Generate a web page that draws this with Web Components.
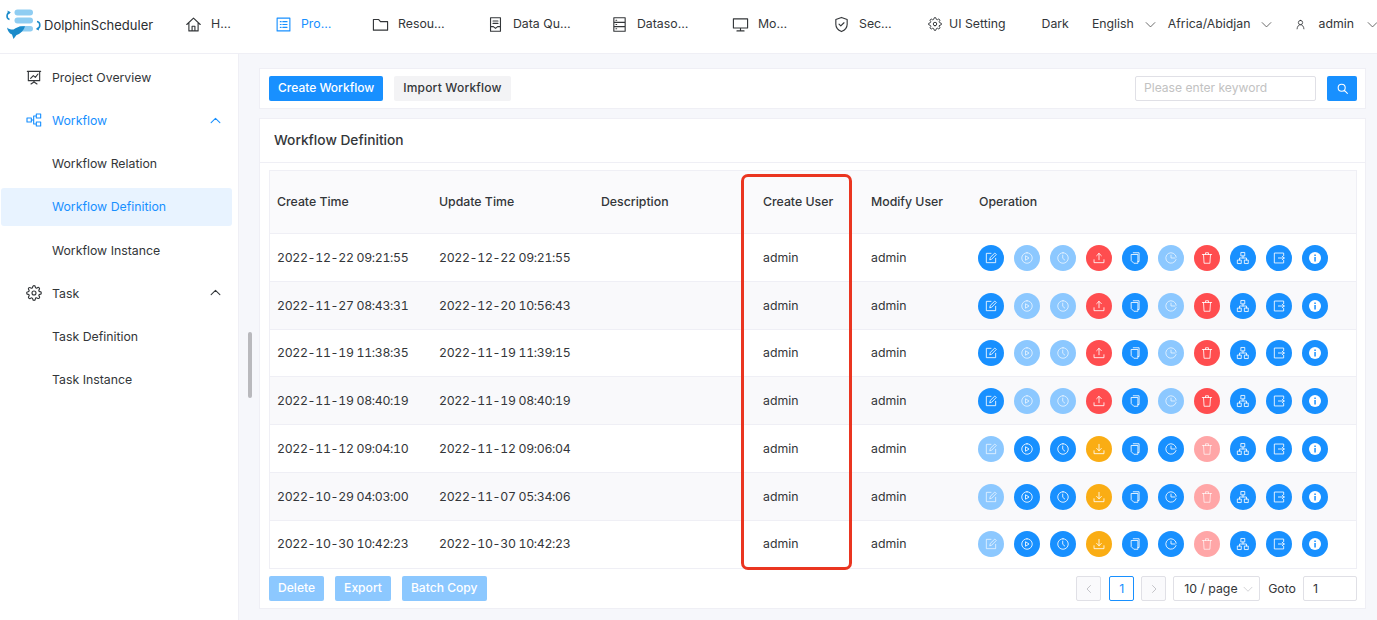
<!DOCTYPE html>
<html lang="en">
<head>
<meta charset="utf-8">
<title>DolphinScheduler</title>
<style>
  html, body { margin: 0; height: 620px; overflow: hidden; background: #f6f7fb; }
  body { font: 12.3px/20px Inter, "Liberation Sans", sans-serif; color: #333639; white-space: nowrap; }
</style>
</head>
<body>
<ds-app></ds-app>

<script>
// stroke paths, all on a 24 box
const ICONS = {
  home: 'M2.5 12 12 3l9.500 9M5.500 10v11h13V10M10 21v-6.500h4V21',
  project: 'M3 3h18v18H3zM7.500 8h1.200M7.500 12h1.200M7.500 16h1.200M11 8h6M11 12h6M11 16h6',
  folder: 'M2 5h7.500l2.500 3h10v12H2z',
  quality: 'M5 2.500h14v19H5zM8.500 7h7M8.500 10.500h7M5 15h4l3 2.500 3-2.500h4',
  source: 'M4 2.500h16v19H4zM4 9h16M4 15h16M7 6h1M7 12h1M7 18h1',
  monitor: 'M2 4h20v13H2zM12 17v4M7 21h10',
  shield: 'M12 2 20 5v6.500c0 5-3.500 8.500-8 10.500-4.500-2-8-5.500-8-10.500V5zM8.500 11.500l2.500 2.500 4.500-4.500',
  gear: 'M12 15a3 3 0 1 0 0-6 3 3 0 0 0 0 6zM19.4 15a1.65 1.65 0 0 0 .33 1.82l.06.06a2 2 0 0 1 0 2.83 2 2 0 0 1-2.83 0l-.06-.06a1.65 1.65 0 0 0-1.82-.33 1.65 1.65 0 0 0-1 1.51V21a2 2 0 0 1-2 2 2 2 0 0 1-2-2v-.09A1.65 1.65 0 0 0 9 19.4a1.65 1.65 0 0 0-1.82.33l-.06.06a2 2 0 0 1-2.83 0 2 2 0 0 1 0-2.83l.06-.06a1.65 1.65 0 0 0 .33-1.82 1.65 1.65 0 0 0-1.51-1H3a2 2 0 0 1-2-2 2 2 0 0 1 2-2h.09A1.65 1.65 0 0 0 4.6 9a1.65 1.65 0 0 0-.33-1.82l-.06-.06a2 2 0 0 1 0-2.83 2 2 0 0 1 2.83 0l.06.06a1.65 1.65 0 0 0 1.82.33H9a1.65 1.65 0 0 0 1-1.51V3a2 2 0 0 1 2-2 2 2 0 0 1 2 2v.09a1.65 1.65 0 0 0 1 1.51 1.65 1.65 0 0 0 1.82-.33l.06-.06a2 2 0 0 1 2.83 0 2 2 0 0 1 0 2.83l-.06.06a1.65 1.65 0 0 0-.33 1.82V9a1.65 1.65 0 0 0 1.51 1H21a2 2 0 0 1 2 2 2 2 0 0 1-2 2h-.09a1.65 1.65 0 0 0-1.51 1z',
  user: 'M12 3a4.700 4.700 0 1 0 0 9.400A4.700 4.700 0 0 0 12 3zM4.500 21.500c.4-5.500 3.500-9 7.500-9s7.100 3.500 7.500 9',
  down: 'M4 8.500l8 8 8-8',
  up: 'M5 15.500l7-7 7 7',
  left: 'M15 5l-7 7 7 7',
  right: 'M9 5l7 7-7 7',
  overview: 'M2 3.500h20M3.500 3.500v14h17v-14M7 14l4-4 3 2.500 4-5M12 17.500v2M7.500 22.500l4.500-3 4.500 3',
  workflow: 'M1.500 9h6.500v6H1.500zM15.500 3H22v6h-6.500zM15.500 15H22v6h-6.500zM8 12h3.500M11.500 6v12M11.500 6h4M11.500 18h4',
  search: 'M10.500 4a6.500 6.500 0 1 0 0 13 6.500 6.500 0 0 0 0-13zM15.500 15.500 21 21',
  edit: 'M20 12.500V20H4V4h8M10 14.500l.8-3.500L18.500 3.500l2.500 2.500-7.500 7.700z',
  play: 'M12 3a9 9 0 1 0 0 18 9 9 0 0 0 0-18zM10 8.500l5.500 3.500-5.500 3.500z',
  clock: 'M12 3a9 9 0 1 0 0 18 9 9 0 0 0 0-18zM11.500 7v5.500l3.500 3',
  upload: 'M12 15V4M8 8l4-4 4 4M3.500 15v5h17v-5',
  download: 'M12 4v11M8 11l4 4 4-4M3.500 15v5h17v-5',
  copy: 'M9 3h10v15h-2M6 6h11v15H10l-4-4z',
  timing: 'M21 10.500a9 9 0 1 0-.3 4.200M12 7v5h7',
  trash: 'M4 6h16M9.500 6V3h5v3M6 6l1 15h10l1-15',
  tree: 'M9 2.500h6v6H9zM3 15.500h6v6H3zM15 15.500h6v6h-6zM12 8.500V12M6 15.500V12h12v3.500',
  exit: 'M20 8V3.500H4v17h16V16M11 12h10M17.500 9l3.500 3-3.500 3'
};

class DsIcon extends HTMLElement {
  connectedCallback() {
    const size = this.getAttribute('size') || 16;
    const sw = this.getAttribute('stroke') || 1.8;
    const d = ICONS[this.getAttribute('name')] || '';
    this.attachShadow({ mode: 'open' }).innerHTML = `
      <style>:host { display: inline-flex; flex: none; } svg { display: block; }</style>
      <svg width="${size}" height="${size}" viewBox="0 0 24 24" fill="none" stroke="currentColor"
           stroke-width="${sw}" stroke-linecap="round" stroke-linejoin="round"><path d="${d}"/></svg>`;
  }
}
customElements.define('ds-icon', DsIcon);

class DsLogo extends HTMLElement {
  constructor() {
    super();
    this.attachShadow({ mode: 'open' }).innerHTML = `
      <style>
        :host { display: flex; align-items: center; width: 185px; flex: none; padding-left: 5px; box-sizing: border-box; }
        svg { display: block; flex: none; margin-top: 1px; }
        span { font-size: 13px; color: #2b2e31; margin: 1px 0 0 2px; }
      </style>
      <svg width="37" height="31" viewBox="0 0 37 31" fill="none">
        <rect x="9.500" y="0.500" width="18.500" height="6" rx="3" fill="#8fcdf2"/>
        <rect x="9.500" y="8.500" width="18.500" height="6" rx="3" fill="#8fcdf2"/>
        <rect x="13" y="17" width="15" height="5.500" rx="2.700" fill="#8fcdf2"/>
        <path d="M5 3.500C1.500 3.500 .8 9.500 4.500 10.500" stroke="#1b8bca" stroke-width="1.600"/>
        <path d="M2.500 1.500 5.800 3.500 3 5.500z" fill="#1b8bca"/>
        <path d="M32 12.500c3.500.5 4 6.500 0 7.500" stroke="#1b8bca" stroke-width="1.600"/>
        <path d="M34 21.500 30.800 20l2.800-2z" fill="#1b8bca"/>
        <path d="M2 18.500c1.800 1.600 4 2.200 6.500 2 3-2.400 7-3.800 11.500-3.200-1.200 4.200-4.500 7.400-8.500 8.700L8.500 30l-1.500-4.400c-2.800-1.200-4.500-3.700-5-7.100z" fill="#1b8bca"/>
      </svg>
      <span>DolphinScheduler</span>`;
  }
}
customElements.define('ds-logo', DsLogo);

class DsNavItem extends HTMLElement {
  connectedCallback() {
    const active = this.hasAttribute('active');
    this.attachShadow({ mode: 'open' }).innerHTML = `
      <style>
        :host { display: flex; align-items: center; flex: none; height: 46px; width: ${this.getAttribute('w')}px; color: ${active ? '#1890ff' : '#333639'}; }
        .i { width: 26px; flex: none; display: flex; }
      </style>
      <div class="i"><ds-icon name="${this.getAttribute('icon')}" size="17" stroke="1.600"></ds-icon></div>
      <slot></slot>`;
  }
}
customElements.define('ds-nav-item', DsNavItem);

class DsDrop extends HTMLElement {
  connectedCallback() {
    this.attachShadow({ mode: 'open' }).innerHTML = `
      <style>
        :host { display: flex; align-items: center; flex: none; height: 46px; margin-left: ${this.getAttribute('ml') || 0}px; }
        ds-icon { margin-left: ${this.getAttribute('gap') || 10}px; color: #555; }
      </style>
      <slot></slot>${this.hasAttribute('plain') ? '' : '<ds-icon name="down" size="13" stroke="1.600"></ds-icon>'}`;
  }
}
customElements.define('ds-drop', DsDrop);

class DsHeader extends HTMLElement {
  constructor() {
    super();
    this.attachShadow({ mode: 'open' }).innerHTML = `
      <style>
        :host { display: flex; align-items: center; height: 54px; box-sizing: border-box; padding-bottom: 5px; background: #fff; border-bottom: 1px solid #efeff5; }
        .gear { display: flex; align-items: center; gap: 7px; flex: none; height: 46px; }
        .user { display: flex; align-items: center; flex: none; margin-left: 22px; height: 46px; }
        .user > ds-icon { margin-right: 12px; }
      </style>
      <ds-logo></ds-logo>
      <ds-nav-item icon="home" w="90">H…</ds-nav-item>
      <ds-nav-item icon="project" w="97" active>Pro…</ds-nav-item>
      <ds-nav-item icon="folder" w="115">Resou…</ds-nav-item>
      <ds-nav-item icon="quality" w="124">Data Qu…</ds-nav-item>
      <ds-nav-item icon="source" w="121">Dataso…</ds-nav-item>
      <ds-nav-item icon="monitor" w="101">Mo…</ds-nav-item>
      <ds-nav-item icon="shield" w="95">Sec…</ds-nav-item>
      <div class="gear"><ds-icon name="gear" size="14" stroke="1.700"></ds-icon><span>UI Setting</span></div>
      <ds-drop plain ml="36">Dark</ds-drop>
      <ds-drop ml="23">English</ds-drop>
      <ds-drop ml="11">Africa/Abidjan</ds-drop>
      <div class="user"><ds-icon name="user" size="11" stroke="1.800"></ds-icon><ds-drop gap="12">admin</ds-drop></div>`;
  }
}
customElements.define('ds-header', DsHeader);

class DsSideItem extends HTMLElement {
  connectedCallback() {
    const icon = this.getAttribute('icon');
    const chev = this.getAttribute('chev');
    const active = this.hasAttribute('active');
    const color = this.hasAttribute('blue') || active ? '#1890ff' : '#333639';
    this.attachShadow({ mode: 'open' }).innerHTML = `
      <style>
        :host { display: flex; align-items: center; height: 38px; margin: 0 6px 5.200px 1px; padding-left: 25px; border-radius: 3px;
                color: ${color}; background: ${active ? '#e8f3ff' : 'transparent'}; }
        .i { width: 26px; flex: none; display: flex; }
        .t { flex: 1; margin-top: ${active ? 0 : 2}px; }
        .c { margin-right: 9.500px; display: flex; }
      </style>
      <div class="i">${icon ? `<ds-icon name="${icon}" size="16" stroke="1.700"></ds-icon>` : ''}</div>
      <div class="t"><slot></slot></div>
      ${chev ? `<div class="c"><ds-icon name="${chev}" size="15" stroke="1.700"></ds-icon></div>` : ''}`;
  }
}
customElements.define('ds-side-item', DsSideItem);

class DsSidebar extends HTMLElement {
  constructor() {
    super();
    this.attachShadow({ mode: 'open' }).innerHTML = `
      <style>
        :host { display: block; position: relative; width: 239px; box-sizing: border-box; padding-top: 4px; background: #fff; border-right: 1px solid #efeff5; flex: none; }
        .thumb { position: absolute; left: 247.500px; top: 278px; width: 4px; height: 66px; border-radius: 2px; background: #b9b9bd; }
      </style>
      <ds-side-item icon="overview">Project Overview</ds-side-item>
      <ds-side-item icon="workflow" chev="up" blue>Workflow</ds-side-item>
      <ds-side-item>Workflow Relation</ds-side-item>
      <ds-side-item active>Workflow Definition</ds-side-item>
      <ds-side-item>Workflow Instance</ds-side-item>
      <ds-side-item icon="gear" chev="up">Task</ds-side-item>
      <ds-side-item>Task Definition</ds-side-item>
      <ds-side-item>Task Instance</ds-side-item>
      <div class="thumb"></div>`;
  }
}
customElements.define('ds-sidebar', DsSidebar);

class DsButton extends HTMLElement {
  connectedCallback() {
    const kind = this.getAttribute('kind') || 'primary';
    const look = {
      primary: 'background:#1890ff;color:#fff;font-size:12px;',
      soft: 'background:#8cc8ff;color:#fff;font-size:12.1px;',
      plain: 'background:#f3f3f5;color:#333639;font-size:12px;letter-spacing:.2px;'
    }[kind];
    this.attachShadow({ mode: 'open' }).innerHTML = `
      <style>
        :host { display: inline-flex; align-items: center; justify-content: center; height: 25px; box-sizing: border-box; padding: 0 9px 2px; border-radius: 2px; flex: none; font-weight: 500; ${look} }
      </style><slot></slot>`;
  }
}
customElements.define('ds-button', DsButton);

class DsToolbar extends HTMLElement {
  constructor() {
    super();
    this.attachShadow({ mode: 'open' }).innerHTML = `
      <style>
        :host { display: flex; align-items: center; height: 41px; box-sizing: border-box; padding: 0 8px 0 9px; background: #fff; border: 1px solid #efeff5; }
        ds-button + ds-button { margin-left: 11px; }
        .sp { flex: 1; }
        .input { width: 181px; height: 25px; box-sizing: border-box; border: 1px solid #e0e0e6; border-radius: 2px; padding: 0 8px; line-height: 22px; font-size: 12.100px; color: #c2c2c2; margin-right: 11px; }
        .go { width: 30px; padding: 0; }
      </style>
      <ds-button>Create Workflow</ds-button>
      <ds-button kind="plain">Import Workflow</ds-button>
      <div class="sp"></div>
      <div class="input">Please enter keyword</div>
      <ds-button class="go"><ds-icon name="search" size="13" stroke="2"></ds-icon></ds-button>`;
  }
}
customElements.define('ds-toolbar', DsToolbar);

class DsOp extends HTMLElement {
  connectedCallback() {
    const colors = { blue: '#1890ff', light: '#8cc8ff', red: '#ff4d4f', pink: '#ffa6a7', orange: '#faad14' };
    const name = this.getAttribute('icon');
    const tone = this.getAttribute('tone');
    const glyph = name === 'info'
      ? `<svg width="14" height="14" viewBox="0 0 14 14"><circle cx="7" cy="7" r="6" fill="#fff"/><rect x="6.300" y="6" width="1.500" height="4.500" fill="#1890ff"/><rect x="6.300" y="3.500" width="1.500" height="1.500" fill="#1890ff"/></svg>`
      : `<ds-icon name="${name}" size="14" stroke="1.600"></ds-icon>`;
    this.attachShadow({ mode: 'open' }).innerHTML = `
      <style>
        :host { display: flex; align-items: center; justify-content: center; width: 26px; height: 26px; border-radius: 50%; flex: none;
                background: ${colors[tone]}; color: ${tone === 'light' || tone === 'pink' ? 'rgba(255,255,255,.7)' : 'rgba(255,255,255,.9)'}; }
      </style>${glyph}`;
  }
}
customElements.define('ds-op', DsOp);

const COLS = '162px 162px 162px 108px 108px 1fr';

class DsRow extends HTMLElement {
  connectedCallback() {
    // online workflows can be edited out of, offline ones can be run
    const on = this.getAttribute('state') === 'online';
    const a = on ? 'blue' : 'light';
    const b = on ? 'light' : 'blue';
    const ops = [
      ['edit', a], ['play', b], ['clock', b],
      [on ? 'upload' : 'download', on ? 'red' : 'orange'],
      ['copy', 'blue'], ['timing', b],
      ['trash', on ? 'red' : 'pink'],
      ['tree', 'blue'], ['exit', 'blue'], ['info', 'blue']
    ].map(([i, t]) => `<ds-op icon="${i}" tone="${t}"></ds-op>`).join('');
    this.attachShadow({ mode: 'open' }).innerHTML = `
      <style>
        :host { display: grid; grid-template-columns: ${COLS}; align-items: center; height: 47.750px; box-sizing: border-box; border-top: 1px solid #efeff5; background: ${this.hasAttribute('alt') ? '#f9f9fb' : '#fff'}; }
        div { padding-left: 7px; margin-top: 1px; }
        .d { font-variant-numeric: tabular-nums; letter-spacing: -0.32px; }
        .ops { display: flex; gap: 10px; padding-left: 6px; margin-top: 1px; }
      </style>
      <div class="d">${this.getAttribute('created')}</div>
      <div class="d">${this.getAttribute('updated')}</div>
      <div></div>
      <div>admin</div>
      <div>admin</div>
      <div class="ops">${ops}</div>`;
  }
}
customElements.define('ds-row', DsRow);

class DsTable extends HTMLElement {
  constructor() {
    super();
    this.attachShadow({ mode: 'open' }).innerHTML = `
      <style>
        :host { display: block; position: relative; height: 399px; box-sizing: border-box; border: 1px solid #efeff5; margin: 7px 0 0; overflow: visible; }
        .head { display: grid; grid-template-columns: ${COLS}; align-items: center; height: 62px; background: #fafafc; font-weight: 500; }
        .head div { padding-left: 7px; }
        .mark { position: absolute; left: 471px; top: 3px; width: 111px; height: 396px; box-sizing: border-box; border: 3px solid #ea3520; border-radius: 7px; pointer-events: none; }
      </style>
      <div class="head">
        <div>Create Time</div><div>Update Time</div><div>Description</div>
        <div>Create User</div><div>Modify User</div><div>Operation</div>
      </div>
      <slot></slot>
      <div class="mark"></div>`;
  }
}
customElements.define('ds-table', DsTable);

class DsPager extends HTMLElement {
  constructor() {
    super();
    this.attachShadow({ mode: 'open' }).innerHTML = `
      <style>
        :host { display: flex; align-items: center; height: 25px; margin-top: 7px; }
        ds-button + ds-button { margin-left: 11px; }
        .sp { flex: 1; }
        .b { width: 25px; height: 25px; box-sizing: border-box; border: 1px solid #e0e0e6; border-radius: 2px; display: flex; align-items: center; justify-content: center; flex: none; }
        .off { background: #fafafc; color: #b8b8bc; }
        .on { border-color: #1890ff; color: #1890ff; margin: 0 7px 0 8px; padding-top: 1px; }
        .sel { width: 87px; height: 25px; box-sizing: border-box; border: 1px solid #e0e0e6; border-radius: 2px; display: flex; align-items: center; padding-left: 10px; margin-left: 7px; gap: 4px; flex: none; }
        .sel ds-icon { color: #c2c2c6; }
        .goto { margin: 1px 7px 0 8px; }
        .in { width: 54px; height: 25px; box-sizing: border-box; border: 1px solid #e0e0e6; border-radius: 2px; padding-left: 9px; line-height: 24px; flex: none; }
      </style>
      <ds-button kind="soft">Delete</ds-button>
      <ds-button kind="soft">Export</ds-button>
      <ds-button kind="soft">Batch Copy</ds-button>
      <div class="sp"></div>
      <div class="b off"><ds-icon name="left" size="12" stroke="1.600"></ds-icon></div>
      <div class="b on">1</div>
      <div class="b off"><ds-icon name="right" size="12" stroke="1.600"></ds-icon></div>
      <div class="sel">10 / page<ds-icon name="down" size="12" stroke="1.400"></ds-icon></div>
      <div class="goto">Goto</div>
      <div class="in">1</div>`;
  }
}
customElements.define('ds-pager', DsPager);

class DsCard extends HTMLElement {
  connectedCallback() {
    this.attachShadow({ mode: 'open' }).innerHTML = `
      <style>
        :host { display: block; height: 491px; box-sizing: border-box; background: #fff; border: 1px solid #efeff5; }
        .t { height: 44px; box-sizing: border-box; padding: 0 0 2px 14px; display: flex; align-items: center; font-size: 13.750px; font-weight: 500; border-bottom: 1px solid #efeff5; }
        .b { padding: 0 8px 0 9px; }
      </style>
      <div class="t">${this.getAttribute('heading')}</div>
      <div class="b"><slot></slot></div>`;
  }
}
customElements.define('ds-card', DsCard);

class DsApp extends HTMLElement {
  constructor() {
    super();
    const rows = [
      ['2022-12-22 09:21:55', '2022-12-22 09:21:55', 'online'],
      ['2022-11-27 08:43:31', '2022-12-20 10:56:43', 'online'],
      ['2022-11-19 11:38:35', '2022-11-19 11:39:15', 'online'],
      ['2022-11-19 08:40:19', '2022-11-19 08:40:19', 'online'],
      ['2022-11-12 09:04:10', '2022-11-12 09:06:04', 'offline'],
      ['2022-10-29 04:03:00', '2022-11-07 05:34:06', 'offline'],
      ['2022-10-30 10:42:23', '2022-10-30 10:42:23', 'offline']
    ].map((r, i) => `<ds-row created="${r[0]}" updated="${r[1]}" state="${r[2]}" ${i % 2 ? 'alt' : ''}></ds-row>`).join('');
    this.attachShadow({ mode: 'open' }).innerHTML = `
      <style>
        :host { display: block; height: 620px; overflow: hidden; }
        .body { display: flex; height: 566px; }
        main { flex: 1; min-width: 0; padding: 14px 11px 0 20px; display: flex; flex-direction: column; gap: 9px; }
      </style>
      <ds-header></ds-header>
      <div class="body">
        <ds-sidebar></ds-sidebar>
        <main>
          <ds-toolbar></ds-toolbar>
          <ds-card heading="Workflow Definition">
            <ds-table>${rows}</ds-table>
            <ds-pager></ds-pager>
          </ds-card>
        </main>
      </div>`;
  }
}
customElements.define('ds-app', DsApp);
</script>
</body>
</html>
